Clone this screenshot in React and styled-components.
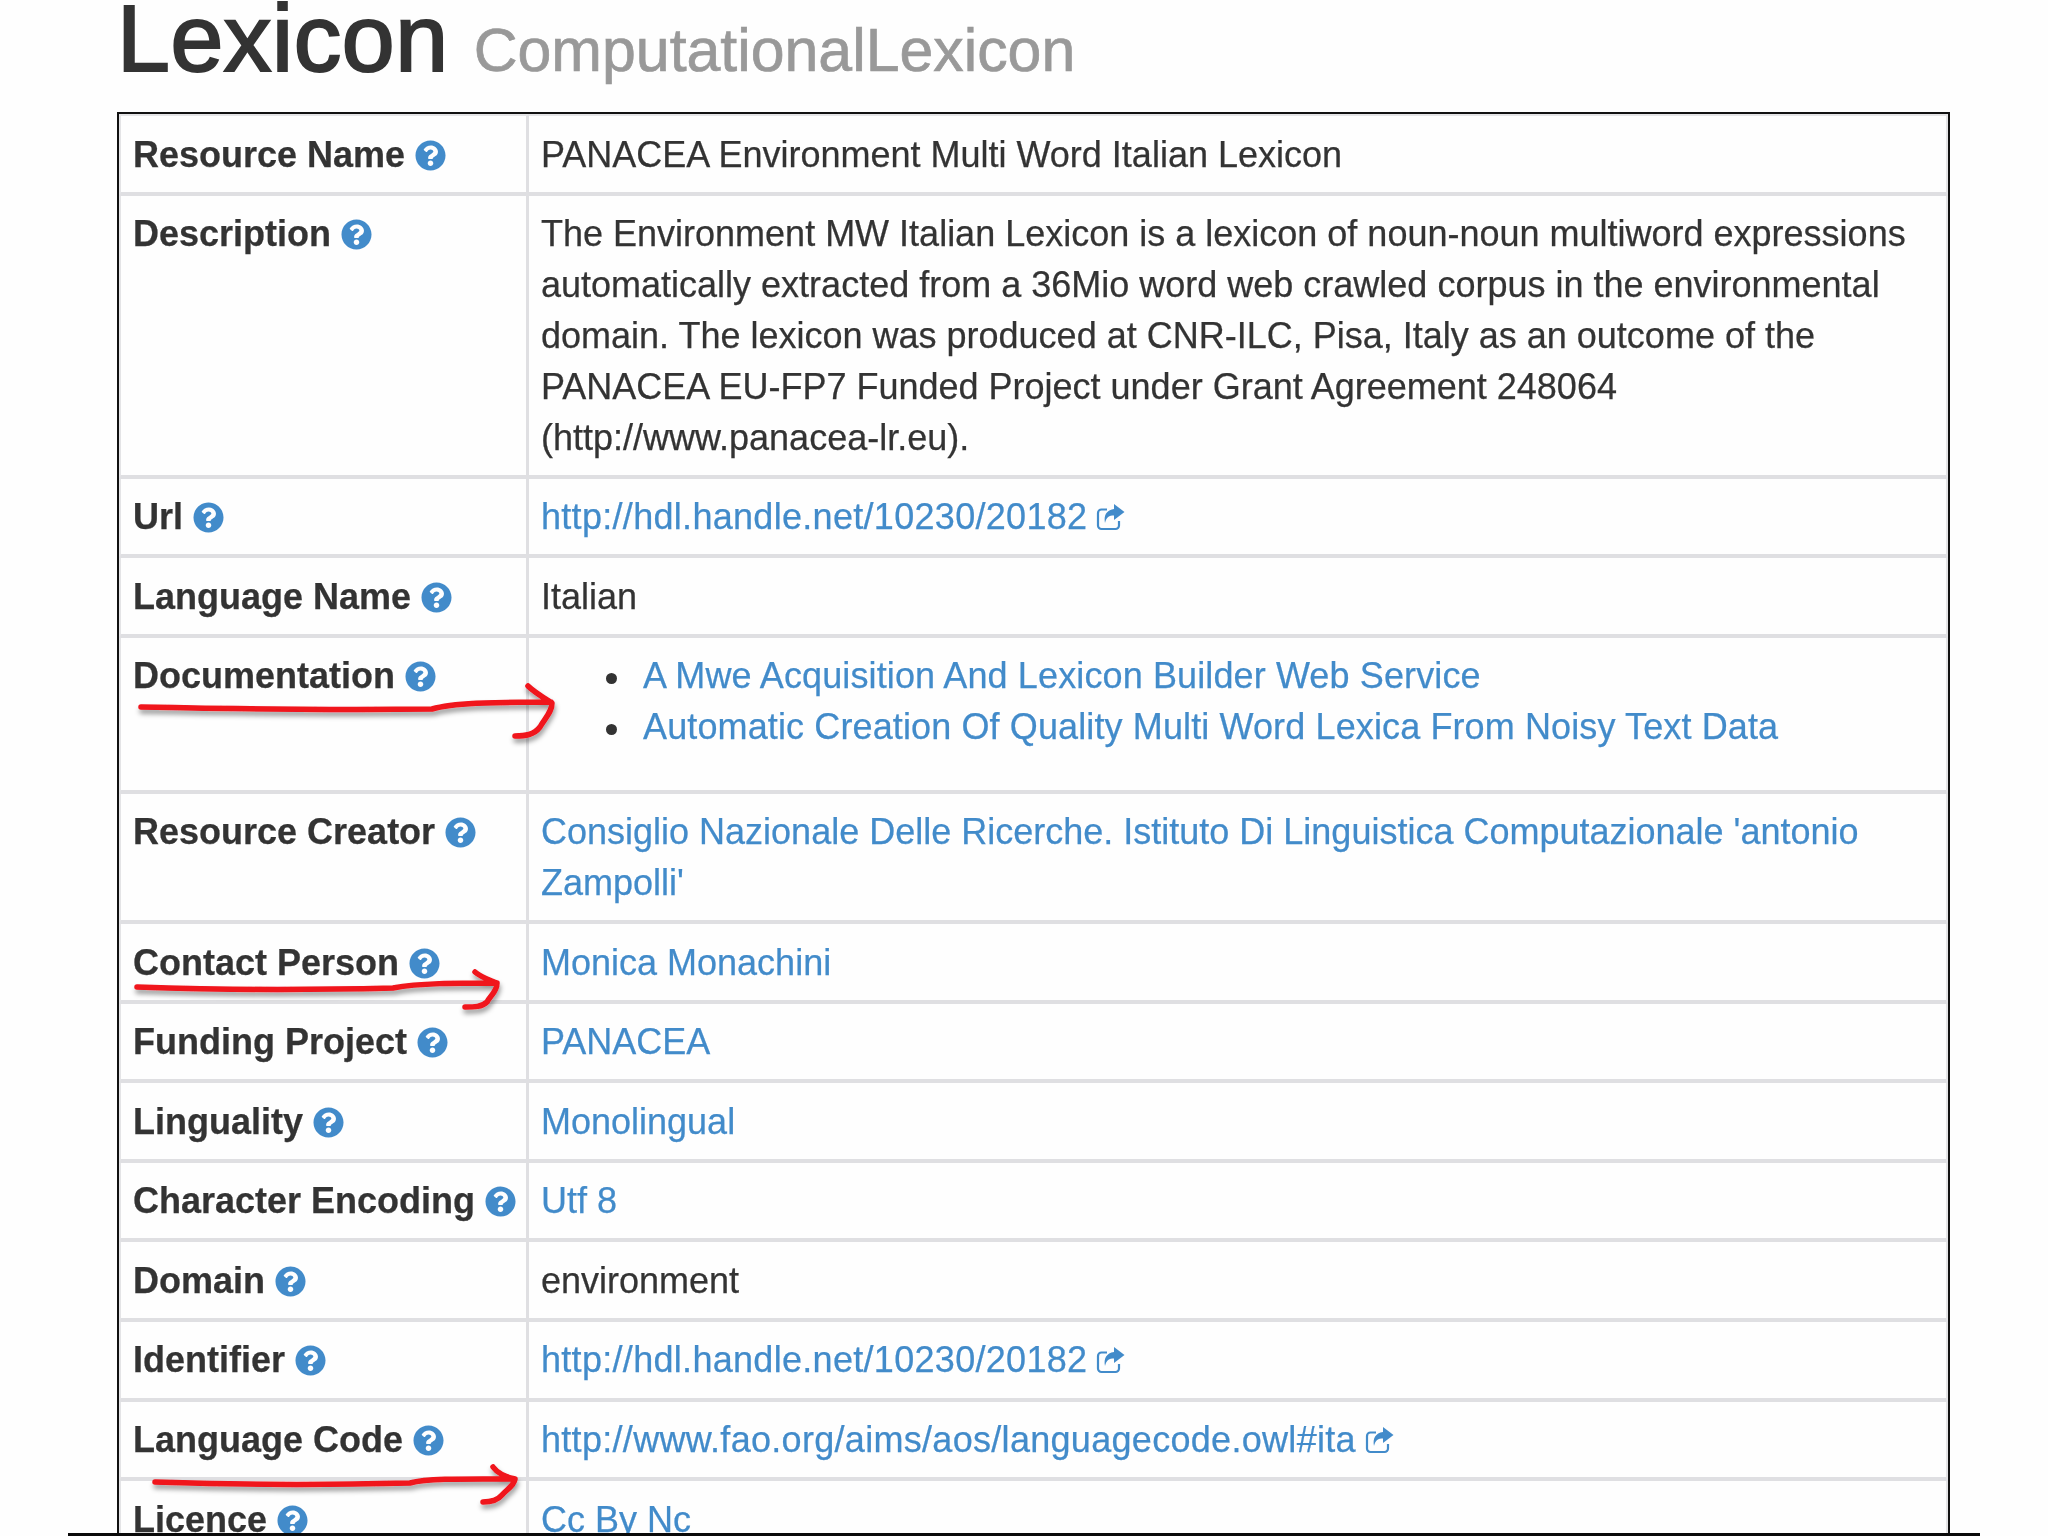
import React from "react";
import styled, { createGlobalStyle } from "styled-components";
import { FaQuestionCircle } from "react-icons/fa";

const GlobalStyle = createGlobalStyle`
  html, body {
    margin: 0;
    padding: 0;
    background: #fefefe;
  }
`;

const Page = styled.div`
  position: relative;
  width: 2048px;
  height: 1536px;
  overflow: hidden;
  box-sizing: border-box;
  padding-left: 117px;
  font-family: "Liberation Sans", Arial, sans-serif;
  color: #333;
  filter: blur(0.5px);
`;

const Heading = styled.h1`
  display: flex;
  align-items: baseline;
  gap: 25px;
  margin: 0 0 36px;
  height: 76px;
  font-size: 95px;
  line-height: 76px;
  font-weight: 400;
  letter-spacing: 0.6px;
  -webkit-text-stroke: 2.2px #333;
`;

const SubHeading = styled.small`
  font-size: 60.8px;
  letter-spacing: 0;
  color: #999;
  -webkit-text-stroke: 0.7px #999;
`;

const Table = styled.table`
  width: 1833px;
  table-layout: fixed;
  border-collapse: separate;
  border-spacing: 0;
  border: 2px solid #111;
  border-bottom: 0;
  font-size: 36px;
  line-height: 50.9px;
  -webkit-text-stroke: 0.25px;
`;

const Cell = styled.td`
  padding: 13.5px 12px 11.15px 12px;
  vertical-align: top;
  border-bottom: 4px solid #dfdfe2;
  border-top: ${({ $first }) => ($first ? "2px solid #e4e4e6" : "0")};
`;

const LabelCell = styled(Cell)`
  width: 381px;
  border-left: 2px solid #e4e4e6;
  border-right: 3px solid #dfdfe2;
  font-weight: 700;
  white-space: nowrap;
`;

const ValueCell = styled(Cell)`
  border-right: 2px solid #e4e4e6;
`;

const Help = styled(FaQuestionCircle)`
  width: 31px;
  height: 31px;
  margin-left: 10px;
  vertical-align: -4px;
  color: #428bca;
`;

const Link = styled.a`
  color: #428bca;
  text-decoration: none;
`;

const UrlText = styled(Link)`
  letter-spacing: 0.3px;
`;

const DocLink = styled(Link)`
  letter-spacing: 0.12px;
`;

const ExternalIcon = styled.svg`
  width: 29px;
  height: 27px;
  margin-left: 9px;
  vertical-align: -2px;
  color: #428bca;
`;

const NoBreak = styled.span`
  white-space: nowrap;
`;

const DocList = styled.ul`
  margin: 0 0 25.5px;
  padding-left: 102px;
  list-style: none;
`;

const DocItem = styled.li`
  &::before {
    content: "";
    display: inline-block;
    width: 11px;
    height: 11px;
    margin-left: -37px;
    margin-right: 26px;
    vertical-align: 4px;
    border-radius: 50%;
    background: #333;
  }
`;

const Scribbles = styled.svg`
  position: absolute;
  left: 0;
  top: 0;
  width: 2048px;
  height: 1536px;
  pointer-events: none;
`;

const BottomRule = styled.div`
  position: absolute;
  left: 68px;
  bottom: 0;
  width: 1912px;
  height: 3px;
  background: #0a0a0a;
`;

// fa-share-square-o: open rounded box with a filled curved arrow
const External = () => (
  <ExternalIcon viewBox="0 0 29 27">
    <path d="M11 5.500H5.500A3.500 3.500 0 0 0 2 9v12.500A3.500 3.500 0 0 0 5.500 25h14a3.500 3.500 0 0 0 3.500-3.500V17" fill="none" stroke="currentColor" strokeWidth="2.2" />
    <path d="M18 0l10.500 8L18 16v-4.500c-5 0-7.500 1.500-9 7.500 -1.500-7.500 1.500-13 9-14z" fill="currentColor" />
  </ExternalIcon>
);

const UrlLink = ({ href }) => (
  <>
    <UrlText href={href}>{href}</UrlText>
    <External />
  </>
);

const rows = [
  { label: "Resource Name", value: "PANACEA Environment Multi Word Italian Lexicon" },
  {
    label: "Description",
    value: (
      <>
        The Environment MW Italian Lexicon is a lexicon of noun-noun multiword expressions automatically extracted from a 36Mio word web crawled corpus in the environmental domain. The lexicon was produced at CNR-ILC, Pisa, Italy as an outcome of the PANACEA EU-FP7 Funded Project under Grant Agreement 248064 <NoBreak>(http://www.panacea-lr.eu).</NoBreak>
      </>
    ),
  },
  { label: "Url", value: <UrlLink href="http://hdl.handle.net/10230/20182" /> },
  { label: "Language Name", value: "Italian" },
  {
    label: "Documentation",
    value: (
      <DocList>
        <DocItem>
          <DocLink href="#">A Mwe Acquisition And Lexicon Builder Web Service</DocLink>
        </DocItem>
        <DocItem>
          <DocLink href="#">Automatic Creation Of Quality Multi Word Lexica From Noisy Text Data</DocLink>
        </DocItem>
      </DocList>
    ),
  },
  {
    label: "Resource Creator",
    value: <Link href="#">Consiglio Nazionale Delle Ricerche. Istituto Di Linguistica Computazionale 'antonio Zampolli'</Link>,
  },
  { label: "Contact Person", value: <Link href="#">Monica Monachini</Link> },
  { label: "Funding Project", value: <Link href="#">PANACEA</Link> },
  { label: "Linguality", value: <Link href="#">Monolingual</Link> },
  { label: "Character Encoding", value: <Link href="#">Utf 8</Link> },
  { label: "Domain", value: "environment" },
  { label: "Identifier", value: <UrlLink href="http://hdl.handle.net/10230/20182" /> },
  { label: "Language Code", value: <UrlLink href="http://www.fao.org/aims/aos/languagecode.owl#ita" /> },
  { label: "Licence", value: <Link href="#">Cc By Nc</Link> },
];

const arrows = [
  "M141 707 C240 709 340 710 432 709 C452 703 490 702 551 702 M528 686 C534 692 544 698 552 703 C552 712 545 718 540 727 C534 735 525 736 515 736",
  "M137 987 C220 990 310 990 393 988 C420 983 455 983 497 983 M475 972 C482 978 490 980 497 983 C497 992 490 996 487 1002 C482 1007 474 1007 465 1007",
  "M155 1482 C240 1485 330 1485 410 1483 C429 1478 470 1479 515 1479 M493 1467 C498 1474 506 1477 515 1479 C514 1486 506 1490 502 1495 C497 1501 490 1502 483 1502",
];

const App = () => (
  <Page>
    <GlobalStyle />
    <Heading>
      Lexicon <SubHeading>ComputationalLexicon</SubHeading>
    </Heading>
    <Table>
      <tbody>
        {rows.map((row, i) => (
          <tr key={row.label}>
            <LabelCell $first={i === 0}>
              {row.label}
              <Help />
            </LabelCell>
            <ValueCell $first={i === 0}>{row.value}</ValueCell>
          </tr>
        ))}
      </tbody>
    </Table>
    <Scribbles viewBox="0 0 2048 1536">
      <defs>
        <filter id="scribble-shadow" x="-5%" y="-50%" width="110%" height="200%">
          <feDropShadow dx="1" dy="4" stdDeviation="2.5" floodColor="#000" floodOpacity="0.4" />
        </filter>
      </defs>
      {arrows.map((d) => (
        <path key={d} d={d} fill="none" stroke="#f0121b" strokeWidth="5.5" strokeLinecap="round" strokeLinejoin="round" filter="url(#scribble-shadow)" />
      ))}
    </Scribbles>
    <BottomRule />
  </Page>
);

export default App;
